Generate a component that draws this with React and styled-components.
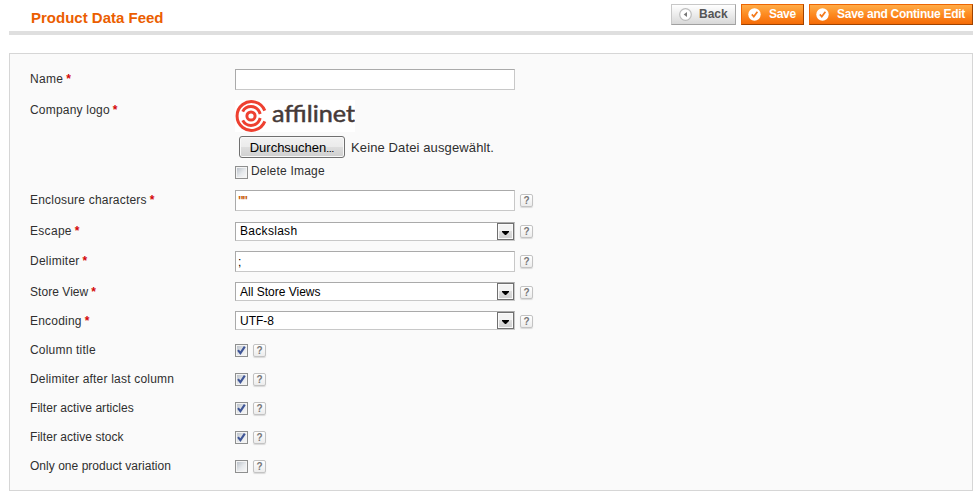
import React from "react";
import styled, { createGlobalStyle } from "styled-components";

const GlobalStyle = createGlobalStyle`
  * { box-sizing: border-box; }
  body {
    margin: 0;
    background: #fff;
    color: #2f2f2f;
    font: 12px/15px "Liberation Sans", Arial, sans-serif;
  }
  button, input { font-family: inherit; }
`;

const Page = styled.main`
  width: 977px;
  height: 494px;
  padding: 0 4px 0 9px;
  overflow: hidden;
`;

const Header = styled.header`
  display: flex;
  justify-content: space-between;
  height: 35px;
  border-bottom: 4px solid #dfdfdf;
`;

const Title = styled.h1`
  margin: 9px 0 0 22px;
  font-size: 15px;
  line-height: 18px;
  font-weight: bold;
  color: #eb5e00;
`;

const Actions = styled.div`
  display: flex;
  gap: 5px;
  padding-top: 4px;
`;

const ActionButton = styled.button`
  display: flex;
  align-items: center;
  width: ${(p) => p.$width}px;
  height: 21px;
  padding: 0 0 1px ${(p) => (p.$plain ? 7 : 6)}px;
  gap: ${(p) => (p.$plain ? 7 : 8)}px;
  border: 1px solid;
  border-color: ${(p) => (p.$plain ? "#c8c8c8 #a5a5a5 #a0a0a0 #c8c8c8" : "#ed6502 #a04300 #a04300 #ed6502")};
  background: ${(p) => (p.$plain ? "linear-gradient(#ffffff, #f0f0f0 40%, #d8d8d8)" : "linear-gradient(#ffac47, #fd8a20 50%, #f56b07)")};
  color: ${(p) => (p.$plain ? "#555" : "#fff")};
  font-size: 12px;
  line-height: 16px;
  font-weight: bold;
  white-space: nowrap;
  letter-spacing: ${(p) => p.$track || 0}px;
  svg { flex: none; margin-top: 1px; }
`;

const Panel = styled.form`
  height: 438px;
  margin-top: 18px;
  padding: 15px 0 0 20px;
  border: 1px solid #d6d6d6;
  background: #fafafa;
`;

const Row = styled.div`
  display: grid;
  grid-template-columns: 205px 1fr;
  height: ${(p) => p.$height}px;
`;

const Label = styled.label`
  padding-top: ${(p) => p.$top ?? 3}px;
  white-space: nowrap;
  letter-spacing: ${(p) => p.$track ?? 0.1}px;
`;

const Required = styled.span`
  color: #d40707;
  margin-left: 3px;
  font-weight: bold;
`;

const Controls = styled.div`
  display: flex;
  align-items: flex-start;
  gap: 5px;
  padding-top: ${(p) => p.$top || 0}px;
`;

const TextInput = styled.input`
  width: 280px;
  height: 21px;
  padding: 0 2px;
  border: 1px solid;
  border-color: #aaa #c8c8c8 #c8c8c8 #aaa;
  border-radius: 0;
  background: #fff;
  color: ${(p) => (p.$accent ? "#c96410" : "#000")};
  font-size: 12px;
  font-weight: ${(p) => (p.$accent ? "bold" : "normal")};
  letter-spacing: ${(p) => (p.$accent ? -1.5 : 0)}px;
  outline: none;
`;

const SelectBox = styled.div`
  display: flex;
  justify-content: space-between;
  width: 280px;
  height: 19px;
  padding-left: 4px;
  border: 1px solid;
  border-color: #aaa #c8c8c8 #c8c8c8 #aaa;
  background: #fff;
  color: #000;
  line-height: ${(p) => p.$line || 18}px;
  letter-spacing: ${(p) => p.$track || 0}px;
`;

const Arrow = styled.span`
  display: flex;
  align-items: center;
  justify-content: center;
  width: 17px;
  height: 17px;
  border: 1px solid #707070;
  background: linear-gradient(#f3f3f3 0 45%, #dddddd 50%, #cfcfcf);
  box-shadow: inset 0 0 0 1px #fafafa;
  svg { margin-top: 3px; }
`;

const HelpBadge = styled.span`
  flex: none;
  width: 13px;
  height: 13px;
  margin-top: ${(p) => p.$top || 0}px;
  border: 1px solid #c3c3c3;
  border-radius: 2px;
  background: linear-gradient(#ffffff, #ececec);
  box-shadow: 0 1px 1px #d9d9d9;
  color: #777;
  font: bold 10px/11px "Liberation Sans", Arial, sans-serif;
  text-align: center;
`;

const Box = styled.span`
  display: flex;
  flex: none;
  width: 13px;
  height: 13px;
  padding: 1px;
  border: 1px solid #8e8f8f;
  background: linear-gradient(135deg, #bcc2ca, #e6e9ec 55%, #f6f6f6) content-box, #f4f4f4;
`;

const LogoCell = styled.div`
  display: flex;
  flex-direction: column;
  align-items: flex-start;
`;

const LogoImage = styled.div`
  width: 120px;
  height: 32px;
  background: #fff;
  svg { display: block; }
`;

const FileRow = styled.div`
  display: flex;
  align-items: center;
  gap: 6px;
  height: 22px;
  margin: 4px 0 0 4px;
  font-size: 13px;
  letter-spacing: 0.12px;
  white-space: nowrap;
`;

const BrowseButton = styled.button`
  width: 106px;
  height: 22px;
  padding: 0;
  border: 1px solid #707070;
  border-radius: 3px;
  background: linear-gradient(#f2f2f2, #ebebeb 48%, #dddddd 52%, #cfcfcf);
  box-shadow: inset 0 0 0 1px #f8f8f8;
  color: #000;
  font-size: 13px;
`;

const Ellipsis = styled.span`
  font-size: 8px;
  font-weight: bold;
`;

const DeleteRow = styled.div`
  display: flex;
  gap: 3px;
  margin-top: 8px;
`;

const DeleteText = styled.span`
  margin-top: -2px;
  letter-spacing: 0.2px;
`;

function Checkbox({ checked }) {
  return (
    <Box role="checkbox" aria-checked={checked}>
      {checked && (
        <svg width="9" height="9" viewBox="0 0 9 9">
          <path d="M1 4.2 3.4 7.2 7.8.6" fill="none" stroke="#3f5596" strokeWidth="2.1" />
        </svg>
      )}
    </Box>
  );
}

function BackIcon() {
  return (
    <svg width="13" height="13" viewBox="0 0 13 13">
      <circle cx="6.5" cy="6.5" r="5.8" fill="#fff" stroke="#bdbdbd" strokeWidth="1.2" />
      <path d="M8 4v5L4.7 6.5z" fill="#777" />
    </svg>
  );
}

function CheckIcon() {
  return (
    <svg width="13" height="13" viewBox="0 0 13 13">
      <circle cx="6.5" cy="6.5" r="6.2" fill="#fff" />
      <path d="M3.8 6.4 5.8 8.6 9.4 3.8" fill="none" stroke="#f47a1c" strokeWidth="1.7" />
    </svg>
  );
}

const LogoWord = styled.text`
  font: 23px "Lato", "Liberation Sans", sans-serif;
  fill: #463a38;
  stroke: #463a38;
  stroke-width: 0.5px;
`;

function AffilinetLogo() {
  return (
    <LogoImage>
      <svg width="120" height="32" viewBox="0 0 120 32">
        <g fill="none" stroke="#ee4030" strokeWidth="3">
          <circle cx="16" cy="16" r="4.1" />
          <path d="M7.7 11.6A9.4 9.4 0 0 1 24.3 11.6L25.2 14" />
          <path d="M7.7 20.4A9.4 9.4 0 0 0 24.3 20.4L25.2 18" />
          <path d="M29.8 10.6A14.4 14.4 0 1 0 29.8 21.4" />
        </g>
        <LogoWord x="37" y="22.3" textLength="83" lengthAdjust="spacingAndGlyphs">affilinet</LogoWord>
      </svg>
    </LogoImage>
  );
}

function Select({ value, track, line }) {
  return (
    <SelectBox $track={track} $line={line}>
      {value}
      <Arrow>
        <svg width="7" height="4" viewBox="0 0 7 4"><path d="M0 0h7v1L4 4H3L0 1z" fill="#000" /></svg>
      </Arrow>
    </SelectBox>
  );
}

function Field({ label, height, required, top, track, children }) {
  return (
    <Row $height={height}>
      <Label $top={top} $track={track}>
        {label}
        {required && <Required>*</Required>}
      </Label>
      {children}
    </Row>
  );
}

const toggles = [
  { label: "Column title", checked: true, track: 0.2 },
  { label: "Delimiter after last column", checked: true, track: 0.2 },
  { label: "Filter active articles", checked: true, track: 0.05 },
  { label: "Filter active stock", checked: true, track: 0.05 },
  { label: "Only one product variation", checked: false, track: 0.03 },
];

export default function App() {
  return (
    <>
      <GlobalStyle />
      <Page>
        <Header>
          <Title>Product Data Feed</Title>
          <Actions>
            <ActionButton $plain $width={65}><BackIcon />Back</ActionButton>
            <ActionButton $width={63} $track={-0.3}><CheckIcon />Save</ActionButton>
            <ActionButton $width={164} $track={-0.27}><CheckIcon />Save and Continue Edit</ActionButton>
          </Actions>
        </Header>
        <Panel>
          <Field label="Name" required height={31} track={0.3}>
            <Controls><TextInput /></Controls>
          </Field>
          <Field label="Company logo" required height={90} track={0.2}>
            <LogoCell>
              <AffilinetLogo />
              <FileRow>
                <BrowseButton type="button">Durchsuchen<Ellipsis>…</Ellipsis></BrowseButton>
                Keine Datei ausgewählt.
              </FileRow>
              <DeleteRow>
                <Checkbox checked={false} />
                <DeleteText>Delete Image</DeleteText>
              </DeleteRow>
            </LogoCell>
          </Field>
          <Field label="Enclosure characters" required height={32} track={0.2}>
            <Controls><TextInput $accent defaultValue={'""'} /><HelpBadge $top={4}>?</HelpBadge></Controls>
          </Field>
          <Field label="Escape" required height={29} top={2} track={0.3}>
            <Controls><Select value="Backslash" line={16} track={0.3} /><HelpBadge $top={3}>?</HelpBadge></Controls>
          </Field>
          <Field label="Delimiter" required height={31} track={0.25}>
            <Controls><TextInput defaultValue=";" /><HelpBadge $top={4}>?</HelpBadge></Controls>
          </Field>
          <Field label="Store View" required height={29} track={0.05}>
            <Controls><Select value="All Store Views" /><HelpBadge $top={4}>?</HelpBadge></Controls>
          </Field>
          <Field label="Encoding" required height={29} track={0.2}>
            <Controls><Select value="UTF-8" /><HelpBadge $top={4}>?</HelpBadge></Controls>
          </Field>
          {toggles.map(({ label, checked, track }) => (
            <Field key={label} label={label} height={29} track={track}>
              <Controls $top={4}><Checkbox checked={checked} /><HelpBadge>?</HelpBadge></Controls>
            </Field>
          ))}
        </Panel>
      </Page>
    </>
  );
}
